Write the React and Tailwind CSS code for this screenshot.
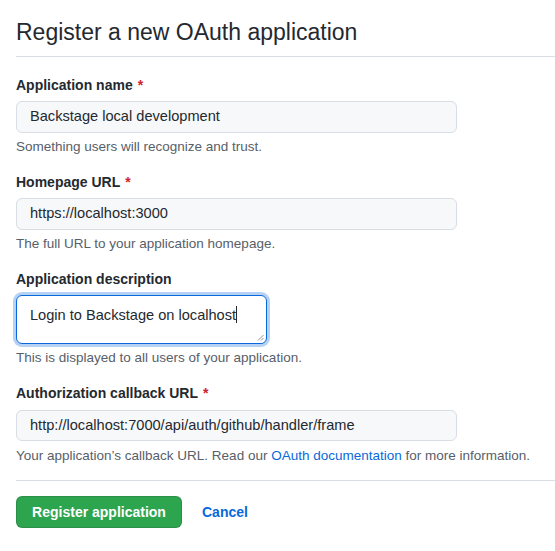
const Label = ({ children, required }) => (
  <label className="block text-[14px] leading-[20px] font-semibold text-[#24292f]">
    {children}
    {required && <span className="text-[#cf222e] ml-[5px]">*</span>}
  </label>
);

const Field = ({ label, required, value, hint, className = '' }) => (
  <div className={className}>
    <Label required={required}>{label}</Label>
    <div className="mt-[6px] w-[441px] h-[32px] flex items-center px-[13px] rounded-[6px] border border-[#d8dee4] bg-[#f6f8fa] text-[14.6px] text-[#24292f]">
      {value}
    </div>
    <p className="mt-[5px] text-[13.5px] leading-[18px] text-[#57606a] whitespace-nowrap">{hint}</p>
  </div>
);

export default function App() {
  return (
    <div
      className="min-h-screen bg-white pl-4 pt-[17px] overflow-hidden"
      style={{ fontFamily: '"Liberation Sans", Arial, sans-serif' }}
    >
      {/* Header */}
      <div className="border-b border-[#d8dee4] pb-[9px]">
        <h1 className="text-[23px] leading-[30px] font-normal text-[#24292f]">Register a new OAuth application</h1>
      </div>

      <form className="pt-[18px]">
        <Field
          label="Application name"
          required
          value="Backstage local development"
          hint="Something users will recognize and trust."
        />
        <Field
          className="mt-[16px]"
          label="Homepage URL"
          required
          value="https://localhost:3000"
          hint="The full URL to your application homepage."
        />

        {/* Description */}
        <div className="mt-[16px]">
          <Label>Application description</Label>
          <div className="relative mt-[6px] w-[251px] h-[49px] px-[13px] pt-[9px] rounded-[6px] border border-[#0969da] shadow-[0_0_0_3px_rgba(9,105,218,0.3)] bg-white text-[14.6px] leading-[20px] text-[#24292f] whitespace-nowrap">
            Login to Backstage on localhost
            <span className="inline-block w-px h-[17px] bg-[#24292f] align-middle -mt-[3px]" />
            <svg className="absolute right-[2px] bottom-[2px]" width="7" height="7" viewBox="0 0 7 7">
              <path d="M1 6.5L6.5 1M4 6.5L6.5 4" stroke="#777" strokeWidth="0.8" />
            </svg>
          </div>
          <p className="mt-[5px] text-[13.5px] leading-[18px] text-[#57606a]">This is displayed to all users of your application.</p>
        </div>

        <div className="mt-[16px]">
          <Label required>Authorization callback URL</Label>
          <div className="mt-[7px] w-[441px] h-[31px] flex items-center px-[13px] rounded-[6px] border border-[#d8dee4] bg-[#f6f8fa] text-[14.6px] text-[#24292f] whitespace-nowrap">
            http://localhost:7000/api/auth/github/handler/frame
          </div>
          <p className="mt-[6px] text-[13.5px] leading-[18px] text-[#57606a] whitespace-nowrap">
            Your application’s callback URL. Read our <a className="text-[#0969da]">OAuth documentation</a> for more information.
          </p>
        </div>

        <div className="mt-[15px] border-t border-[#d8dee4] pt-[15px] flex items-center gap-[20px]">
          <button
            type="button"
            className="h-[32px] w-[166px] rounded-[6px] bg-[#2da44e] border border-[rgba(27,31,36,0.15)] text-white text-[14px] font-semibold"
          >
            Register application
          </button>
          <a className="text-[#0969da] text-[14px] font-semibold">Cancel</a>
        </div>
      </form>
    </div>
  );
}
